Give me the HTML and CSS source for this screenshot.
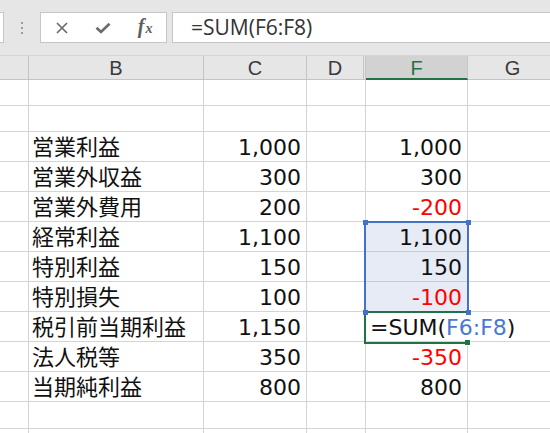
FILE: index.html
```html
<!DOCTYPE html>
<html lang="ja">
<head>
<meta charset="utf-8">
<link rel="stylesheet" href="styles.css">
</head>
<body>
<div class="app">
  <div class="toolbar">
    <div class="namebox"></div>
    <div class="grip"><span></span><span></span><span></span></div>
    <div class="fbtns">
      <div class="slot"><svg width="14" height="14" viewBox="0 0 14 14"><path d="M2 2L12 12M12 2L2 12" stroke="#6b6b6b" stroke-width="1.7" fill="none"/></svg></div>
      <div class="slot"><svg width="16" height="12" viewBox="0 0 16 12"><path d="M1.5 5.8L6 10L14.5 1.8" stroke="#6b6b6b" stroke-width="2.6" fill="none"/></svg></div>
      <div class="slot"><span class="fx"><i class="f">f</i><i class="x">x</i></span></div>
    </div>
    <div class="finput">=SUM(F6:F8)</div>
  </div>
  <div class="sheet">
    <div class="c h"></div><div class="c h">B</div><div class="c h">C</div><div class="c h hd">D</div><div class="c h hsel">F</div><div class="c h">G</div>

    <div class="c"></div><div class="c"></div><div class="c"></div><div class="c"></div><div class="c"></div><div class="c"></div>
    <div class="c"></div><div class="c"></div><div class="c"></div><div class="c"></div><div class="c"></div><div class="c"></div>

    <div class="c"></div><div class="c t">営業利益</div><div class="c n">1,000</div><div class="c"></div><div class="c n">1,000</div><div class="c"></div>
    <div class="c"></div><div class="c t">営業外収益</div><div class="c n">300</div><div class="c"></div><div class="c n">300</div><div class="c"></div>
    <div class="c"></div><div class="c t">営業外費用</div><div class="c n">200</div><div class="c"></div><div class="c n neg">-200</div><div class="c"></div>
    <div class="c"></div><div class="c t">経常利益</div><div class="c n">1,100</div><div class="c"></div><div class="c n sel">1,100</div><div class="c"></div>
    <div class="c"></div><div class="c t">特別利益</div><div class="c n">150</div><div class="c"></div><div class="c n sel">150</div><div class="c"></div>
    <div class="c"></div><div class="c t">特別損失</div><div class="c n">100</div><div class="c"></div><div class="c n neg sel">-100</div><div class="c"></div>
    <div class="c"></div><div class="c t">税引前当期利益</div><div class="c n">1,150</div><div class="c"></div><div class="c edit">=SUM(<span class="ref">F6:F8</span>)</div><div class="c"></div>
    <div class="c"></div><div class="c t">法人税等</div><div class="c n">350</div><div class="c"></div><div class="c n neg">-350</div><div class="c"></div>
    <div class="c"></div><div class="c t">当期純利益</div><div class="c n">800</div><div class="c"></div><div class="c n">800</div><div class="c"></div>

    <div class="c"></div><div class="c"></div><div class="c"></div><div class="c"></div><div class="c"></div><div class="c"></div>
    <div class="c"></div><div class="c"></div><div class="c"></div><div class="c"></div><div class="c"></div><div class="c"></div>

    <div class="selbox"></div>
    <div class="activebox"></div>
    <div class="fillhandle"></div>
    <div class="hdl hdl-tl"></div>
    <div class="hdl hdl-tr"></div>
    <div class="hdl hdl-bl"></div>
    <div class="hdl hdl-br"></div>
  </div>
</div>
</body>
</html>
```
FILE: styles.css
```css
html, body {
  margin: 0;
  padding: 0;
  background: #ffffff;
}
.app {
  width: 550px;
  height: 433px;
  overflow: hidden;
  position: relative;
}
.toolbar {
  height: 55px;
  background: #e6e6e6;
  display: flex;
  align-items: center;
  box-sizing: border-box;
}
.namebox {
  width: 4px;
  height: 31px;
  box-sizing: border-box;
  background: #fff;
  border: 1px solid #c6c6c6;
  border-left: none;
}
.grip {
  margin-left: 17px;
  width: 2px;
  display: flex;
  flex-direction: column;
  gap: 3px;
}
.grip span {
  width: 2px;
  height: 2px;
  background: #9a9a9a;
}
.fbtns {
  margin-left: 17px;
  width: 127px;
  height: 31px;
  box-sizing: border-box;
  background: #fff;
  border: 1px solid #c6c6c6;
  display: grid;
  grid-template-columns: repeat(3, 1fr);
  align-items: center;
  justify-items: center;
}
.slot {
  display: flex;
  align-items: center;
  justify-content: center;
  height: 100%;
}
.fx {
  font-family: "Liberation Serif", serif;
  color: #5e5e5e;
  display: inline-flex;
  align-items: baseline;
  margin-top: -2px;
  font-weight: bold;
}
.fx .f {
  font-size: 20px;
  font-style: italic;
}
.fx .x {
  font-size: 14px;
  font-style: italic;
  margin-left: 1px;
}
.finput {
  margin-left: 5px;
  height: 31px;
  flex: 1;
  margin-right: -10px;
  box-sizing: border-box;
  background: #fff;
  border: 1px solid #c6c6c6;
  font-family: "Open Sans", sans-serif;
  font-size: 21px;
  line-height: 28px;
  color: #333;
  padding-left: 18px;
}
.sheet {
  position: relative;
  display: grid;
  grid-template-columns: 29px 175px 103px 59px 102px 90px;
  grid-template-rows: 25px 26px 26px repeat(9, 30px) 27px 27px;
  background: #fff;
}
.c {
  box-sizing: border-box;
  border-right: 1px solid #d4d4d4;
  border-bottom: 1px solid #d4d4d4;
  font-family: "DejaVu Sans", "Noto Sans CJK JP", sans-serif;
  font-size: 22px;
  line-height: 27px;
  padding-top: 2px;
  color: #111;
  white-space: nowrap;
}
.h {
  background: #e6e6e6;
  border-top: 1px solid #d6d6d6;
  border-right-color: #c4c4c4;
  border-bottom-color: #c4c4c4;
  font-family: "Liberation Sans", sans-serif;
  font-size: 20px;
  line-height: 22px;
  padding-top: 1px;
  text-align: center;
  color: #3a3a3a;
}
.hd {
  border-right: 3px double #c4c4c4;
}
.hsel {
  background: #d2d2d2;
  color: #217346;
  border-bottom: 2px solid #217346;
}
.t {
  padding-left: 3px;
}
.n {
  text-align: right;
  padding-right: 5px;
}
.neg {
  color: #ff0000;
}
.sel {
  background: #e6ebf5;
  border-bottom-color: #c9ccd3;
}
.edit {
  border-right-color: transparent;
  padding-left: 4px;
  overflow: visible;
}
.ref {
  color: #4a78d0;
}
.selbox {
  position: absolute;
  left: 364px;
  top: 166px;
  width: 105px;
  height: 92px;
  box-sizing: border-box;
  border: 2px solid #4472c4;
}
.activebox {
  position: absolute;
  left: 364px;
  top: 256px;
  width: 104px;
  height: 33px;
  box-sizing: border-box;
  border: 2px solid #217346;
  border-right: none;
}
.fillhandle {
  position: absolute;
  left: 465px;
  top: 285px;
  width: 5px;
  height: 5px;
  background: #217346;
  border: 1px solid #fff;
  border-top: none;
  border-left: none;
}
.hdl {
  position: absolute;
  width: 5px;
  height: 5px;
  background: #4472c4;
}
.hdl-tl { left: 363px; top: 165px; }
.hdl-tr { left: 466px; top: 165px; }
.hdl-bl { left: 363px; top: 255px; }
.hdl-br { left: 466px; top: 255px; }
```
